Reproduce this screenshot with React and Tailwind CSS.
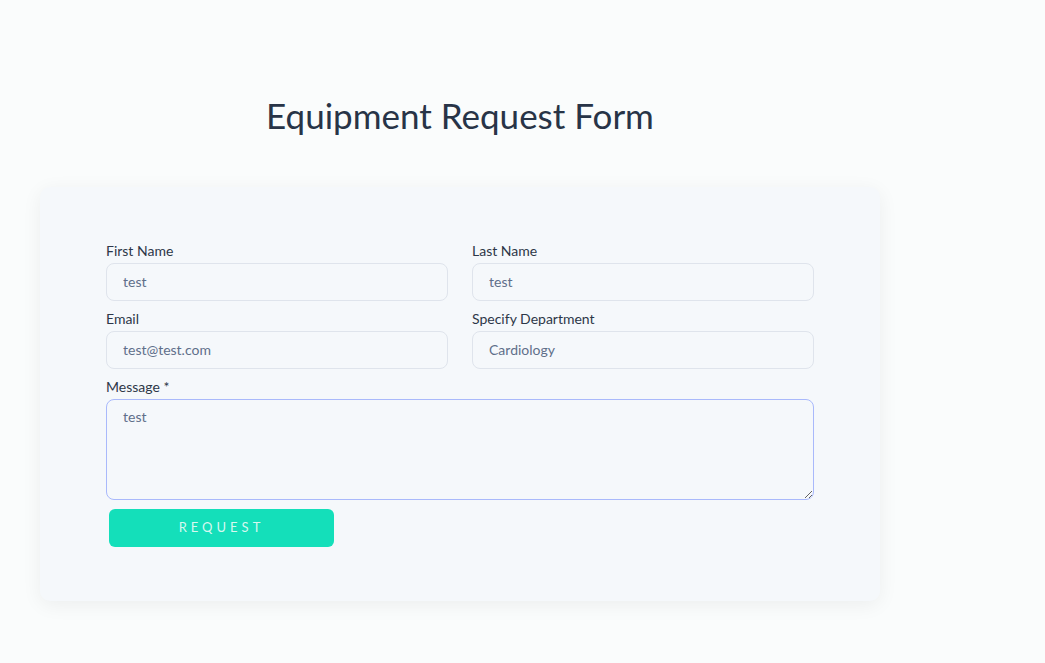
import React from "react";

function Field({ label, value }) {
  return (
    <div className="flex flex-col">
      <label className="text-[14px] leading-[20px] mb-[2px] text-[#2d3748]">{label}</label>
      <input
        readOnly
        value={value}
        className="box-border h-[38px] rounded-[8px] border border-[#dfe4ec] bg-[#f5f8fb] px-4 pb-[2px] text-[14px] text-[#5f6f8a] outline-none"
      />
    </div>
  );
}

export default function App() {
  return (
    <div className="min-h-[663px] w-full bg-[#fafcfc]" style={{ fontFamily: "Lato, 'Open Sans', sans-serif" }}>
      <div className="w-[840px] ml-[40px] pt-[93px]">
        <h1 className="text-center text-[35px] leading-[44px] text-[#283447] font-normal">Equipment Request Form</h1>
        <div className="mt-[50px] rounded-[10px] bg-[#f5f8fb] shadow-[0_4px_20px_rgba(0,0,0,0.06)] px-[66px] pt-[54px] pb-[54px]">
          <div className="grid grid-cols-2 gap-x-[24px] gap-y-[8px]">
            <Field label="First Name" value="test" />
            <Field label="Last Name" value="test" />
            <Field label="Email" value="test@test.com" />
            <Field label="Specify Department" value="Cardiology" />
            <div className="col-span-2 flex flex-col">
              <label className="text-[14px] leading-[20px] mb-[2px] text-[#2d3748]">Message *</label>
              <textarea
                defaultValue="test"
                className="box-border h-[101px] rounded-[8px] border border-[#a9b9fb] bg-[#f5f8fb] px-4 py-[6px] text-[14px] text-[#5f6f8a] outline-none"
              />
            </div>
          </div>
          <button className="mt-[9px] ml-[3px] h-[38px] w-[225px] rounded-[6px] bg-[#14dfba] text-[13px] tracking-[4px] text-[#d6f8f0]">
            REQUEST
          </button>
        </div>
      </div>
    </div>
  );
}
